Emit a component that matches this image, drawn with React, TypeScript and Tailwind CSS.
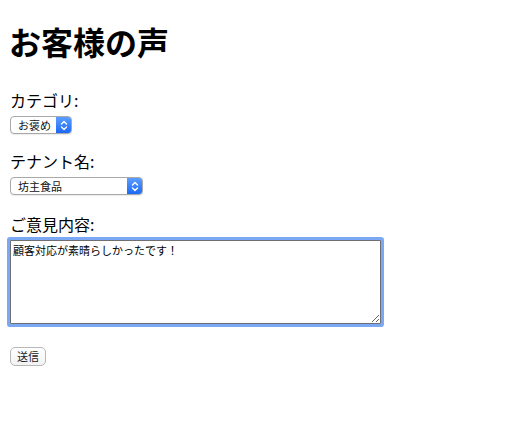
import React from "react";

function FakeSelect({ label, width }: { label: string; width: string }) {
  return (
    <div
      className={`flex h-[18px] ${width} items-stretch rounded-[4px] border border-[#a9a9a9] bg-white shadow-[0_1px_1px_rgba(0,0,0,0.08)] overflow-hidden`}
    >
      <div className="flex flex-1 items-center pl-[7px] text-[11px] leading-none text-[#111]">
        {label}
      </div>
      <div className="flex w-[15px] items-center justify-center bg-gradient-to-b from-[#5b9dff] to-[#1c68f5]">
        <svg width="8" height="11" viewBox="0 0 8 11" fill="none">
          <path d="M1.5 4 L4 1.5 L6.5 4" stroke="white" strokeWidth="1.4" strokeLinecap="round" strokeLinejoin="round" />
          <path d="M1.5 7 L4 9.5 L6.5 7" stroke="white" strokeWidth="1.4" strokeLinecap="round" strokeLinejoin="round" />
        </svg>
      </div>
    </div>
  );
}

export default function App() {
  return (
    <div
      className="min-h-[424px] w-full bg-white pl-[10px] text-black"
      style={{ fontFamily: '"Noto Sans CJK JP", "Liberation Serif", serif' }}
    >
      <div className="h-[23px]" />
      <h1 className="ml-[-1px] h-[37px] text-[32px] font-bold leading-[37px]">お客様の声</h1>
      <div className="h-[31px]" />
      <label className="block h-[19px] text-[16px] leading-[19px]">カテゴリ:</label>
      <div className="h-[6px]" />
      <FakeSelect label="お褒め" width="w-[62px]" />
      <div className="h-[18px]" />
      <label className="block h-[19px] text-[16px] leading-[19px]">テナント名:</label>
      <div className="h-[6px]" />
      <FakeSelect label="坊主食品" width="w-[133px]" />
      <div className="h-[20px]" />
      <label className="block h-[19px] text-[16px] leading-[19px]">ご意見内容:</label>
      <div className="h-[6px]" />
      <textarea
        className="block h-[84px] w-[371px] resize rounded-[1px] border border-[#6f6f6f] bg-white px-[2px] py-[2px] text-[11px] leading-[14px] text-black outline-none ring-[3px] ring-[#7aa8f4]"
        style={{ fontFamily: '"Noto Sans CJK JP", sans-serif' }}
        defaultValue="顧客対応が素晴らしかったです！"
      />
      <div className="h-[23px]" />
      <button className="flex h-[19px] w-[36px] items-center justify-center rounded-[5px] border border-[#b8b8b8] bg-gradient-to-b from-white to-[#f2f2f2] text-[11px] leading-none text-[#222]">
        送信
      </button>
    </div>
  );
}
